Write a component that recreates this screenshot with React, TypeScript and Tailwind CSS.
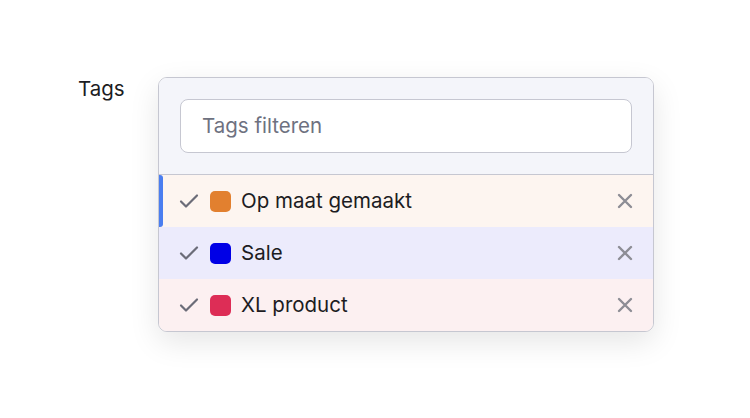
import React from 'react';

const tags = [
  { label: 'Op maat gemaakt', swatch: 'bg-[#e2802f]', row: 'bg-[#fdf5f0]', active: true },
  { label: 'Sale', swatch: 'bg-[#0000e6]', row: 'bg-[#ecebfc]', active: false },
  { label: 'XL product', swatch: 'bg-[#dd2d56]', row: 'bg-[#fcf0f1]', active: false },
];

function Check() {
  return (
    <svg width="20" height="20" viewBox="0 0 20 20" fill="none" className="text-[#6b6c78]">
      <path d="M2 10.5l5 5 11-11" stroke="currentColor" strokeWidth="2.2" strokeLinecap="round" strokeLinejoin="round" />
    </svg>
  );
}

function Cross() {
  return (
    <svg width="16" height="16" viewBox="0 0 16 16" fill="none" className="text-[#8d8d95]">
      <path d="M2 2l12 12M14 2L2 14" stroke="currentColor" strokeWidth="2.4" strokeLinecap="round" />
    </svg>
  );
}

export default function App() {
  return (
    <div className="min-h-[418px] w-[750px] bg-white font-['Inter',sans-serif] text-[#1c1c22]">
      <div className="flex pl-[78px] pt-[77px]">
        <div className="w-[80px] text-[20.5px] leading-[24px]">Tags</div>

        <div className="w-[496px] overflow-hidden rounded-[9px] border border-[#c6c7d1] bg-white shadow-[0_10px_30px_rgba(0,0,0,0.10)]">
          {/* Filter */}
          <div className="border-b border-[#c6c7d1] bg-[#f4f5fa] p-[21px]">
            <div className="flex h-[54px] items-center rounded-[8px] border border-[#c6c7d1] bg-white px-[21px]">
              <span className="text-[20.5px] text-[#6e7180]">Tags filteren</span>
            </div>
          </div>

          {/* Options */}
          {tags.map((tag) => (
            <div key={tag.label} className={`relative flex h-[52px] items-center pl-[20px] pr-[20px] ${tag.row}`}>
              {tag.active && (
                <div className="absolute left-0 top-0 h-full w-[4px] rounded-r-[3px] bg-[#4a7ef0]" />
              )}
              <Check />
              <div className={`ml-[11px] h-[21px] w-[21px] rounded-[5px] ${tag.swatch}`} />
              <span className="ml-[10px] flex-1 text-[20.5px] leading-[24px]">{tag.label}</span>
              <Cross />
            </div>
          ))}
        </div>
      </div>
    </div>
  );
}
